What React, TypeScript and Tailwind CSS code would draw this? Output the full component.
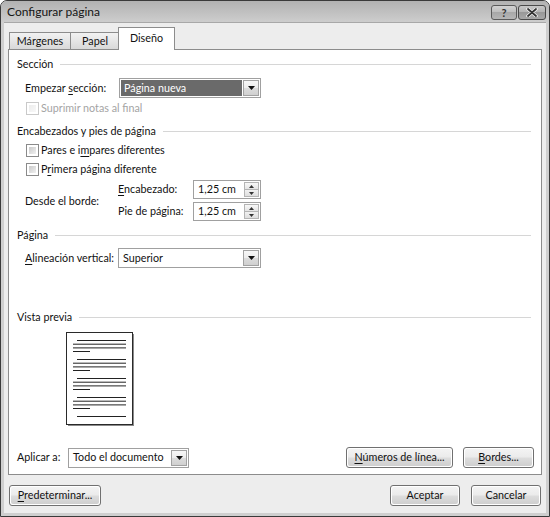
import React from 'react';

function U({ children }: { children: React.ReactNode }) {
  return <span className="underline underline-offset-[2px] decoration-[1px]">{children}</span>;
}

function Header({ label }: { label: string }) {
  return (
    <div className="flex items-center h-[16px]">
      <span>{label}</span>
      <div className="flex-1 h-px bg-[#d6d6d6] ml-[7px] mr-[2px]" />
    </div>
  );
}

function Check({ disabled }: { disabled?: boolean }) {
  return (
    <div className={`w-[13px] h-[13px] border p-[2px] bg-white ${disabled ? 'border-[#c9c9c9]' : 'border-[#8a8a8a]'}`}>
      <div className={`w-full h-full bg-linear-to-br ${disabled ? 'from-[#ececec] to-[#f8f8f8]' : 'from-[#c9c9c9] to-[#f1f1f1]'}`} />
    </div>
  );
}

function ArrowBtn() {
  return (
    <div className="w-[16px] h-full border border-[#a2a2a2] bg-[linear-gradient(#f7f7f7,#ececec_50%,#dcdcdc_50%,#d0d0d0)] flex items-center justify-center">
      <svg width="7" height="4" viewBox="0 0 7 4"><path d="M0 0h7L3.5 4z" fill="#111" /></svg>
    </div>
  );
}

function Combo({ w, text, selected }: { w: string; text: string; selected?: boolean }) {
  return (
    <div className={`${w} h-[20px] border border-[#a0a0a0] bg-white flex p-[1px]`}>
      <div className={`flex-1 flex items-center pl-[3px] mr-[1px] ${selected ? 'bg-[#6a6a6a] text-white' : ''}`}>{text}</div>
      <ArrowBtn />
    </div>
  );
}

function Spin() {
  return (
    <div className="w-[68px] h-[19px] border border-[#a0a0a0] bg-white flex p-[1px]">
      <div className="flex-1 flex items-center pl-[3px]">1,25 cm</div>
      <div className="w-[15px] flex flex-col border border-[#b4b4b4]">
        <div className="flex-1 bg-linear-to-b from-[#f8f8f8] to-[#e4e4e4] flex items-center justify-center border-b border-[#b4b4b4]">
          <svg width="5" height="3" viewBox="0 0 5 3"><path d="M0 3h5L2.5 0z" fill="#333" /></svg>
        </div>
        <div className="flex-1 bg-linear-to-b from-[#f1f1f1] to-[#dedede] flex items-center justify-center">
          <svg width="5" height="3" viewBox="0 0 5 3"><path d="M0 0h5L2.5 3z" fill="#333" /></svg>
        </div>
      </div>
    </div>
  );
}

function Btn({ w, children }: { w: string; children: React.ReactNode }) {
  return (
    <div className={`${w} h-[21px] rounded-[3px] border border-[#707070] p-px bg-white`}>
      <div className="h-full rounded-[2px] bg-[linear-gradient(#f3f3f3,#ebebeb_48%,#dddddd_52%,#cfcfcf)] flex items-center justify-center">
        {children}
      </div>
    </div>
  );
}

function Preview() {
  const groups = [8.5, 27.5, 46.5, 65.5, 84.5];
  return (
    <svg width="70" height="96" viewBox="0 0 70 96">
      <rect x="2" y="2" width="66" height="92" fill="#8a8a8a" />
      <rect x="0.5" y="0.5" width="66" height="92" fill="#fff" stroke="#2a2a2a" />
      {groups.map((g, i) => (
        <g key={i} stroke="#222" strokeWidth="1">
          <line x1="11" x2="60" y1={g} y2={g} />
          {i < 4 && (
            <>
              <line x1="7" x2="60" y1={g + 3.7} y2={g + 3.7} />
              <line x1="7" x2="60" y1={g + 7.4} y2={g + 7.4} />
              <line x1="7" x2="24" y1={g + 11} y2={g + 11} />
            </>
          )}
        </g>
      ))}
    </svg>
  );
}

export default function App() {
  return (
    <div className="w-[550px] h-[517px] bg-white font-['Lato',sans-serif] text-[10.75px] text-[#111] leading-none whitespace-nowrap">
      <div className="w-[550px] h-[517px] border border-[#3a3a3a] rounded-t-[7px] bg-[#cfcfcf] flex flex-col overflow-hidden">
        {/* title bar */}
        <div className="h-[21px] flex items-center bg-linear-to-b from-[#b2b2b2] to-[#cdcdcd] pl-[6px] pr-[3px]">
          <span className="text-[12px] text-[#151515] mt-[1px]">Configurar página</span>
          <div className="flex-1" />
          <div className="flex gap-[1px] mt-[1px]">
            <div className="w-[26px] h-[15px] rounded-[3px] border border-[#5a5a5a] bg-[linear-gradient(#d2d2d2,#bdbdbd_50%,#a8a8a8_50%,#b6b6b6)] flex items-center justify-center">
              <span className="text-[11px] font-bold text-[#333]">?</span>
            </div>
            <div className="w-[28px] h-[15px] rounded-[3px] border border-[#4a4a4a] bg-[linear-gradient(#c8c8c8,#b0b0b0_50%,#989898_50%,#a8a8a8)] flex items-center justify-center">
              <svg width="12" height="9" viewBox="0 0 12 9">
                <path d="M2 1l8 7M10 1L2 8" stroke="#f4f4f4" strokeWidth="3.4" strokeLinecap="round" />
                <path d="M2 1l8 7M10 1L2 8" stroke="#333" strokeWidth="1.8" strokeLinecap="round" />
              </svg>
            </div>
          </div>
        </div>
        {/* client area */}
        <div className="flex-1 mx-[3px] mb-[3px] bg-[#ededed] border-t border-[#a8a8a8] flex flex-col">
          {/* tabs */}
          <div className="flex items-end h-[27px] pl-[5px] -mb-px relative z-10">
            <div className="w-[62px] h-[18px] border border-[#8c8c8c] bg-linear-to-b from-[#f2f2f2] to-[#d9d9d9] flex items-center justify-center pt-[1px]">
              Márgenes
            </div>
            <div className="w-[50px] -ml-px h-[18px] border border-[#8c8c8c] bg-linear-to-b from-[#f2f2f2] to-[#d9d9d9] flex items-center justify-center pt-[1px]">
              Papel
            </div>
            <div className="w-[57px] -ml-[2px] h-[23px] border border-b-0 border-[#8c8c8c] bg-white flex items-center justify-center pb-[2px]">
              Diseño
            </div>
          </div>
          {/* panel */}
          <div className="mx-[4px] h-[426px] border border-[#8c8c8c] bg-white flex flex-col px-[8px] pb-[6px]">
            <div className="mt-[6px]"><Header label="Sección" /></div>
            <div className="mt-[6px] h-[20px] flex items-center pl-[8px]">
              <span className="w-[94px]">Empezar <U>s</U>ección:</span>
              <Combo w="w-[142px]" text="Página nueva" selected />
            </div>
            <div className="mt-[3px] h-[15px] flex items-center pl-[9px] gap-[2px] text-[#a4a4a4]">
              <Check disabled />
              <span>Suprimir notas al final</span>
            </div>
            <div className="mt-[7px]"><Header label="Encabezados y pies de página" /></div>
            <div className="mt-[4px] h-[15px] flex items-center pl-[9px] gap-[2px]">
              <Check />
              <span>Pares e i<U>m</U>pares diferentes</span>
            </div>
            <div className="mt-[4px] h-[15px] flex items-center pl-[9px] gap-[2px]">
              <Check />
              <span>P<U>r</U>imera página diferente</span>
            </div>
            <div className="mt-[3px] flex items-center pl-[8px]">
              <span className="w-[93px] mt-[1px]">Desde el borde:</span>
              <div className="flex flex-col gap-[3px]">
                <div className="flex items-center h-[19px]">
                  <span className="w-[75px]"><U>E</U>ncabezado:</span>
                  <Spin />
                </div>
                <div className="flex items-center h-[19px]">
                  <span className="w-[75px]">Pie de página:</span>
                  <Spin />
                </div>
              </div>
            </div>
            <div className="mt-[6px]"><Header label="Página" /></div>
            <div className="mt-[5px] h-[20px] flex items-center pl-[8px]">
              <span className="w-[93px]"><U>A</U>lineación vertical:</span>
              <Combo w="w-[143px]" text="Superior" />
            </div>
            <div className="mt-[41px]"><Header label="Vista previa" /></div>
            <div className="mt-[7px] ml-[49px]"><Preview /></div>
            <div className="flex-1" />
            <div className="h-[21px] flex items-center -mr-[1px]">
              <span className="w-[51px]">Aplicar a:</span>
              <Combo w="w-[121px]" text="Todo el documento" />
              <div className="flex-1" />
              <Btn w="w-[107px]"><span><U>N</U>úmeros de línea...</span></Btn>
              <div className="w-[10px]" />
              <Btn w="w-[71px]"><span><U>B</U>ordes...</span></Btn>
            </div>
          </div>
          {/* bottom buttons */}
          <div className="mt-[10px] h-[21px] flex items-center pl-[5px] pr-[5px]">
            <Btn w="w-[92px]"><span><U>P</U>redeterminar...</span></Btn>
            <div className="flex-1" />
            <Btn w="w-[70px]"><span>Aceptar</span></Btn>
            <div className="w-[11px]" />
            <Btn w="w-[70px]"><span>Cancelar</span></Btn>
          </div>
        </div>
      </div>
    </div>
  );
}
